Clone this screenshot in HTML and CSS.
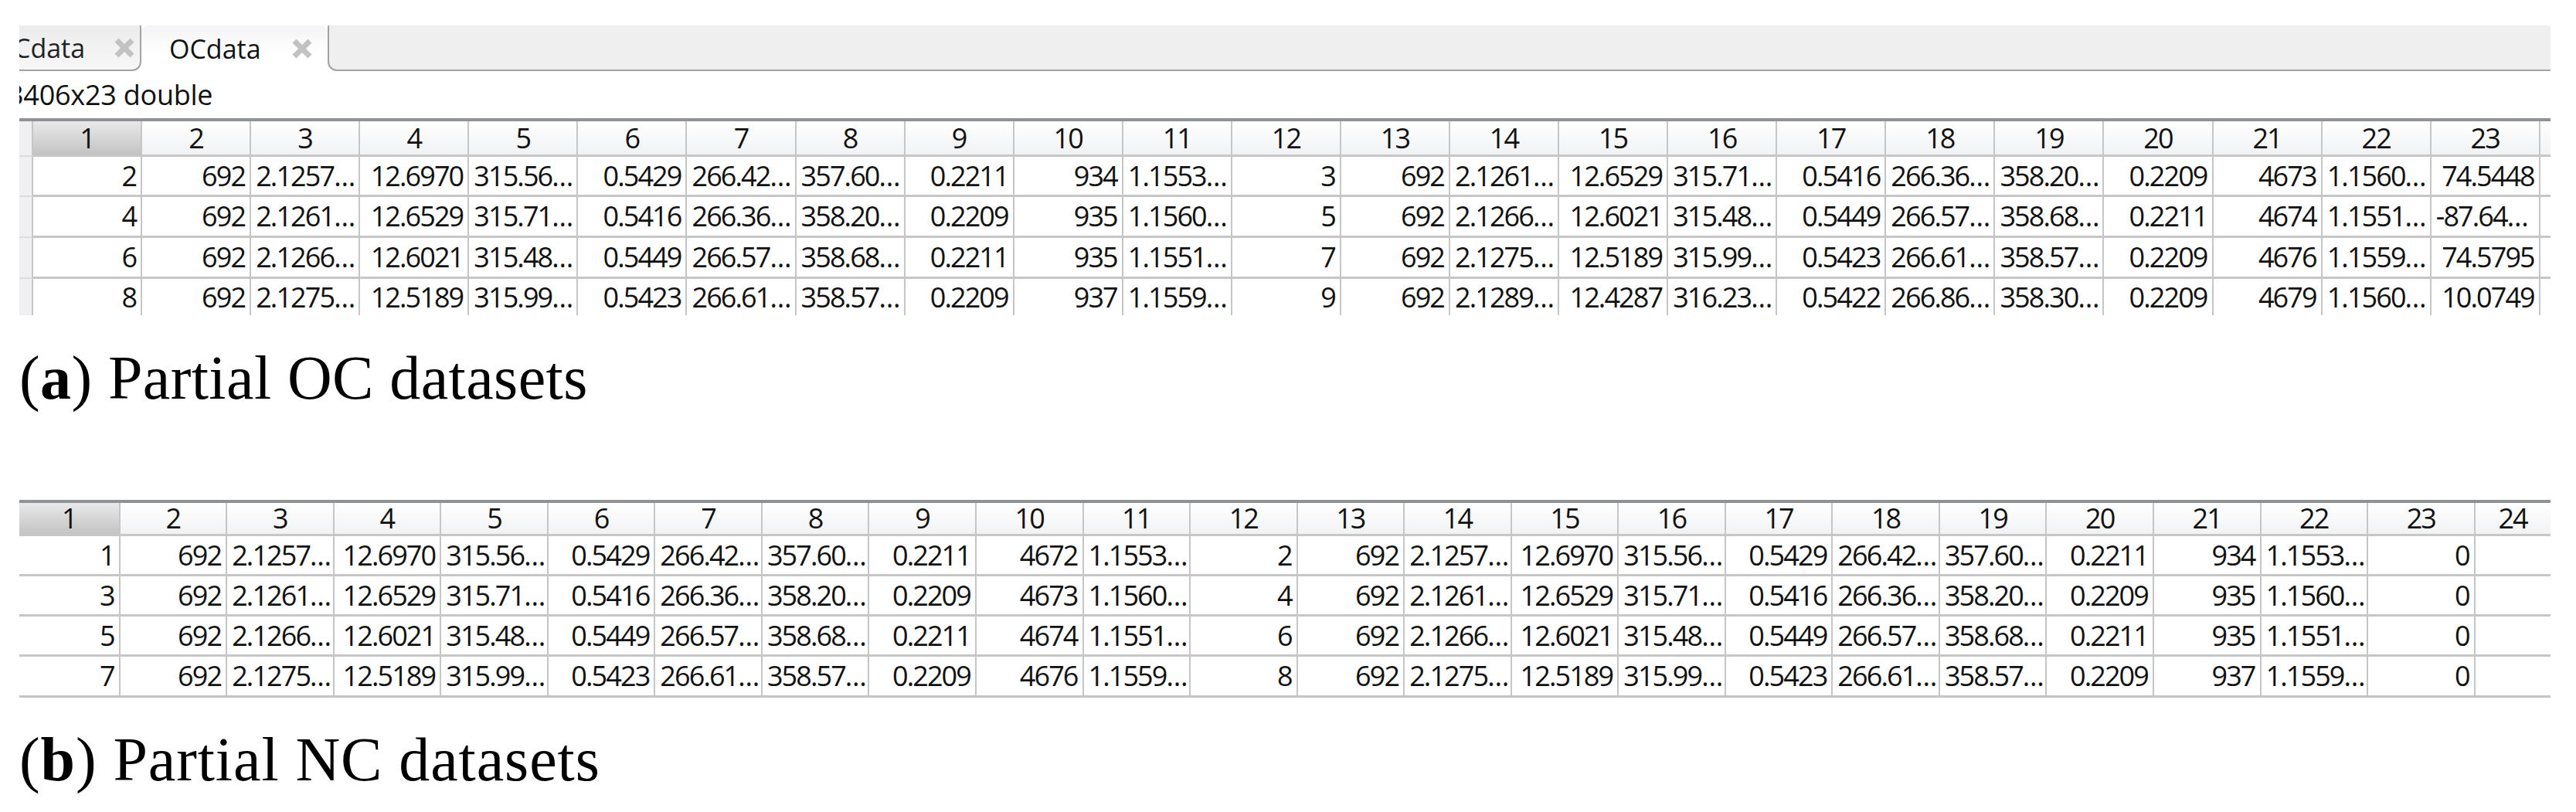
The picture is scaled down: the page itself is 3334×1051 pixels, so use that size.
FILE: index.html
```html
<!DOCTYPE html>
<html lang="en">
<head>
<meta charset="utf-8">
<title>Partial datasets</title>
<link rel="stylesheet" href="styles.css">
</head>
<body>
<main class="page">
<section class="panel panel-a">
  <div class="tabbar">
    <div class="tab tab-back"><span class="tab-label clipped">Cdata</span><svg class="close" viewBox="0 0 26 26"><path d="M3 3L23 23M23 3L3 23"/></svg></div>
    <div class="tab tab-active"><span class="tab-label">OCdata</span><svg class="close" viewBox="0 0 26 26"><path d="M3 3L23 23M23 3L3 23"/></svg></div>
    <div class="tab-rest"></div>
  </div>
  <div class="info"><span>3406x23 double</span></div>
  <div class="grid grid-a">
    <div class="gut"></div><div class="h sel">1</div><div class="h">2</div><div class="h">3</div><div class="h">4</div><div class="h">5</div><div class="h">6</div><div class="h">7</div><div class="h">8</div><div class="h">9</div><div class="h">10</div><div class="h">11</div><div class="h">12</div><div class="h">13</div><div class="h">14</div><div class="h">15</div><div class="h">16</div><div class="h">17</div><div class="h">18</div><div class="h">19</div><div class="h">20</div><div class="h">21</div><div class="h">22</div><div class="h">23</div><div class="h last"></div>

    <div class="gut"></div><div class="c">2</div><div class="c">692</div><div class="c t">2.1257…</div><div class="c">12.6970</div><div class="c t">315.56…</div><div class="c">0.5429</div><div class="c t">266.42…</div><div class="c t">357.60…</div><div class="c">0.2211</div><div class="c">934</div><div class="c t">1.1553…</div><div class="c">3</div><div class="c">692</div><div class="c t">2.1261…</div><div class="c">12.6529</div><div class="c t">315.71…</div><div class="c">0.5416</div><div class="c t">266.36…</div><div class="c t">358.20…</div><div class="c">0.2209</div><div class="c">4673</div><div class="c t">1.1560…</div><div class="c">74.5448</div><div class="c last"></div>

    <div class="gut"></div><div class="c">4</div><div class="c">692</div><div class="c t">2.1261…</div><div class="c">12.6529</div><div class="c t">315.71…</div><div class="c">0.5416</div><div class="c t">266.36…</div><div class="c t">358.20…</div><div class="c">0.2209</div><div class="c">935</div><div class="c t">1.1560…</div><div class="c">5</div><div class="c">692</div><div class="c t">2.1266…</div><div class="c">12.6021</div><div class="c t">315.48…</div><div class="c">0.5449</div><div class="c t">266.57…</div><div class="c t">358.68…</div><div class="c">0.2211</div><div class="c">4674</div><div class="c t">1.1551…</div><div class="c t">-87.64…</div><div class="c last"></div>

    <div class="gut"></div><div class="c">6</div><div class="c">692</div><div class="c t">2.1266…</div><div class="c">12.6021</div><div class="c t">315.48…</div><div class="c">0.5449</div><div class="c t">266.57…</div><div class="c t">358.68…</div><div class="c">0.2211</div><div class="c">935</div><div class="c t">1.1551…</div><div class="c">7</div><div class="c">692</div><div class="c t">2.1275…</div><div class="c">12.5189</div><div class="c t">315.99…</div><div class="c">0.5423</div><div class="c t">266.61…</div><div class="c t">358.57…</div><div class="c">0.2209</div><div class="c">4676</div><div class="c t">1.1559…</div><div class="c">74.5795</div><div class="c last"></div>

    <div class="gut"></div><div class="c">8</div><div class="c">692</div><div class="c t">2.1275…</div><div class="c">12.5189</div><div class="c t">315.99…</div><div class="c">0.5423</div><div class="c t">266.61…</div><div class="c t">358.57…</div><div class="c">0.2209</div><div class="c">937</div><div class="c t">1.1559…</div><div class="c">9</div><div class="c">692</div><div class="c t">2.1289…</div><div class="c">12.4287</div><div class="c t">316.23…</div><div class="c">0.5422</div><div class="c t">266.86…</div><div class="c t">358.30…</div><div class="c">0.2209</div><div class="c">4679</div><div class="c t">1.1560…</div><div class="c">10.0749</div><div class="c last"></div>
  </div>
  <p class="caption">(<b>a</b>) Partial OC datasets</p>
</section>

<section class="panel panel-b">
  <div class="grid grid-b">
    <div class="h sel">1</div><div class="h">2</div><div class="h">3</div><div class="h">4</div><div class="h">5</div><div class="h">6</div><div class="h">7</div><div class="h">8</div><div class="h">9</div><div class="h">10</div><div class="h">11</div><div class="h">12</div><div class="h">13</div><div class="h">14</div><div class="h">15</div><div class="h">16</div><div class="h">17</div><div class="h">18</div><div class="h">19</div><div class="h">20</div><div class="h">21</div><div class="h">22</div><div class="h">23</div><div class="h last">24</div>

    <div class="c">1</div><div class="c">692</div><div class="c t">2.1257…</div><div class="c">12.6970</div><div class="c t">315.56…</div><div class="c">0.5429</div><div class="c t">266.42…</div><div class="c t">357.60…</div><div class="c">0.2211</div><div class="c">4672</div><div class="c t">1.1553…</div><div class="c">2</div><div class="c">692</div><div class="c t">2.1257…</div><div class="c">12.6970</div><div class="c t">315.56…</div><div class="c">0.5429</div><div class="c t">266.42…</div><div class="c t">357.60…</div><div class="c">0.2211</div><div class="c">934</div><div class="c t">1.1553…</div><div class="c">0</div><div class="c last"></div>

    <div class="c">3</div><div class="c">692</div><div class="c t">2.1261…</div><div class="c">12.6529</div><div class="c t">315.71…</div><div class="c">0.5416</div><div class="c t">266.36…</div><div class="c t">358.20…</div><div class="c">0.2209</div><div class="c">4673</div><div class="c t">1.1560…</div><div class="c">4</div><div class="c">692</div><div class="c t">2.1261…</div><div class="c">12.6529</div><div class="c t">315.71…</div><div class="c">0.5416</div><div class="c t">266.36…</div><div class="c t">358.20…</div><div class="c">0.2209</div><div class="c">935</div><div class="c t">1.1560…</div><div class="c">0</div><div class="c last"></div>

    <div class="c">5</div><div class="c">692</div><div class="c t">2.1266…</div><div class="c">12.6021</div><div class="c t">315.48…</div><div class="c">0.5449</div><div class="c t">266.57…</div><div class="c t">358.68…</div><div class="c">0.2211</div><div class="c">4674</div><div class="c t">1.1551…</div><div class="c">6</div><div class="c">692</div><div class="c t">2.1266…</div><div class="c">12.6021</div><div class="c t">315.48…</div><div class="c">0.5449</div><div class="c t">266.57…</div><div class="c t">358.68…</div><div class="c">0.2211</div><div class="c">935</div><div class="c t">1.1551…</div><div class="c">0</div><div class="c last"></div>

    <div class="c">7</div><div class="c">692</div><div class="c t">2.1275…</div><div class="c">12.5189</div><div class="c t">315.99…</div><div class="c">0.5423</div><div class="c t">266.61…</div><div class="c t">358.57…</div><div class="c">0.2209</div><div class="c">4676</div><div class="c t">1.1559…</div><div class="c">8</div><div class="c">692</div><div class="c t">2.1275…</div><div class="c">12.5189</div><div class="c t">315.99…</div><div class="c">0.5423</div><div class="c t">266.61…</div><div class="c t">358.57…</div><div class="c">0.2209</div><div class="c">937</div><div class="c t">1.1559…</div><div class="c">0</div><div class="c last"></div>
  </div>
  <p class="caption">(<b>b</b>) Partial NC datasets</p>
</section>
</main>
</body>
</html>
```

FILE: styles.css
```css
* { box-sizing: border-box; }
html, body { margin: 0; padding: 0; background: #fff; }
body { width: 3334px; height: 1051px; overflow: hidden; }

.page { padding: 33px 33px 0 25px; font-family: "Open Sans", "Liberation Sans", sans-serif; color: #111; }

.panel { width: 3276px; }

/* tab strip */
.tabbar { display: flex; height: 59px; background: #fff; }
.tab { position: relative; display: flex; align-items: center; height: 100%; overflow: hidden; font-size: 34px; line-height: 1; }
.tab-back { width: 158px; background: linear-gradient(#ececec, #f7f7f7); border-bottom: 2px solid #a3a3a3; border-right: 2px solid #a3a3a3; border-bottom-right-radius: 12px; }
.tab-active { width: 241px; padding-left: 36px; border-radius: 8px 8px 0 0; background: linear-gradient(#f4f4f6, #fff 60%); }
.tab-rest { flex: 1; background: #efefef; border-bottom: 2px solid #a3a3a3; border-left: 2px solid #a3a3a3; border-bottom-left-radius: 12px; }
.tab-label { display: block; }
.tab-label.clipped { margin-left: -7px; color: #222; }
.tab-back .close { margin-left: 38px; }
.tab-active .close { margin-left: 40px; }
.close { flex: none; width: 26px; height: 26px; filter: blur(0.7px); }
.close path { fill: none; stroke: #c2c2c2; stroke-width: 7; }

/* variable size line */
.info { height: 61px; overflow: hidden; display: flex; align-items: center; font-size: 36px; line-height: 1; letter-spacing: -0.25px; }
.info span { margin-left: -15px; white-space: nowrap; }

/* data grids */
.grid { display: grid; overflow: hidden; border-top: 4px solid #8f9297; font-size: 36px; line-height: 1; letter-spacing: -1.9px; }
.grid-a { grid-template-columns: 18px repeat(23, 141.09px) 13px; grid-template-rows: 46px 52px 53px 53px 47px; }
.grid-b { grid-template-columns: 130.6px repeat(22, 138.56px) 97px; grid-template-rows: 43px 52px 52px 52px 50px; border-bottom: 3px solid #c4c4c4; }

.gut { background: #f0f0f2; border-right: 2px solid #c6c6c6; border-bottom: 2px solid #dcdcdc; }
.h, .c { display: flex; align-items: center; border-right: 2px solid #c6c6c6; border-bottom: 3px solid #c6c6c6; white-space: nowrap; }
.h { justify-content: center; background: linear-gradient(#fff, #f1f2f4); }
.h.sel { background: linear-gradient(#e9e9e9, #c3c3c3); }
.c { justify-content: flex-end; padding: 0 6px; background: #fff; }
.c.t { justify-content: flex-start; padding-right: 0; }
.last { border-right: 0; }
.grid-a > :nth-last-child(-n+25) { border-bottom: 0; }
.grid-b > :nth-last-child(-n+24) { border-bottom: 0; }

/* captions */
.caption { margin: 0; font-family: "Liberation Serif", "Times New Roman", serif; font-size: 80px; line-height: 1; color: #000; }
.panel-a { height: 614px; }
.panel-a .caption { padding-top: 41px; letter-spacing: 0.4px; }
.panel-b .caption { padding-top: 40px; letter-spacing: 0.9px; }
```
